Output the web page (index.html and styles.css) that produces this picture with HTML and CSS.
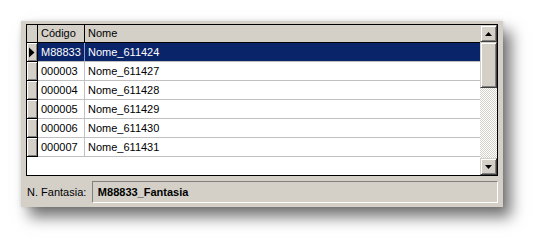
FILE: index.html
```html
<!DOCTYPE html>
<html>
<head>
<meta charset="utf-8">
<link rel="stylesheet" href="styles.css">
</head>
<body>
<div class="panel">
  <div class="grid">
    <div class="data">
      <div class="row head">
        <div class="ind"></div>
        <div class="c1">Código</div>
        <div class="c2">Nome</div>
      </div>
      <div class="row sel">
        <div class="ind"><svg width="6" height="11" viewBox="0 0 6 11"><path d="M0 0.5 L5.5 5.5 L0 10.5 Z" fill="#000"/></svg></div>
        <div class="c1">M88833</div>
        <div class="c2">Nome_611424</div>
      </div>
      <div class="row"><div class="ind"></div><div class="c1">000003</div><div class="c2">Nome_611427</div></div>
      <div class="row"><div class="ind"></div><div class="c1">000004</div><div class="c2">Nome_611428</div></div>
      <div class="row"><div class="ind"></div><div class="c1">000005</div><div class="c2">Nome_611429</div></div>
      <div class="row"><div class="ind"></div><div class="c1">000006</div><div class="c2">Nome_611430</div></div>
      <div class="row"><div class="ind"></div><div class="c1">000007</div><div class="c2">Nome_611431</div></div>
    </div>
    <div class="sbar">
      <div class="btn"><svg width="7" height="4" viewBox="0 0 7 4"><path d="M3.5 0 L7 4 L0 4 Z" fill="#000"/></svg></div>
      <div class="thumb"></div>
      <div class="track"></div>
      <div class="btn"><svg width="7" height="4" viewBox="0 0 7 4"><path d="M0 0 L7 0 L3.5 4 Z" fill="#000"/></svg></div>
    </div>
  </div>
  <div class="foot">
    <span class="lbl">N. Fantasia:</span>
    <div class="field">M88833_Fantasia</div>
  </div>
</div>
</body>
</html>
```
FILE: styles.css
```css
html, body {
  margin: 0;
  padding: 0;
  background: #fff;
}
body {
  width: 546px;
  height: 250px;
  overflow: hidden;
  font-family: "Liberation Sans", Arial, sans-serif;
  font-size: 11px;
  color: #000;
}
.panel {
  margin: 21px 0 0 21px;
  width: 482px;
  height: 186px;
  box-sizing: border-box;
  background: #d4d0c8;
  padding: 3px 5px 0 5px;
  box-shadow: 8px 10px 14px rgba(0,0,0,0.55), 0 0 4px rgba(0,0,0,0.12);
  display: flex;
  flex-direction: column;
}
.grid {
  width: 472px;
  height: 152px;
  box-sizing: border-box;
  border: 1px solid #000;
  background: #fff;
  display: flex;
}
.data {
  width: 453px;
  height: 150px;
  display: flex;
  flex-direction: column;
  background: #fff;
}
.row {
  display: flex;
  height: 19px;
  box-sizing: border-box;
  border-bottom: 1px solid #c0c0c0;
}
.row > div {
  box-sizing: border-box;
  height: 18px;
  line-height: 18px;
  padding-left: 3px;
  white-space: nowrap;
}
.ind {
  width: 11px;
  flex: none;
  background: #d4d0c8;
  border-right: 1px solid #000;
  box-shadow: inset 1px 1px 0 #fff, inset -1px -1px 0 #808080;
  display: flex;
  align-items: center;
  padding-left: 0 !important;
}
.ind svg { margin-left: 2px; }
.row:not(.head) .ind { height: 19px; margin-bottom: -1px; border-bottom: 1px solid #000; }
.c1 {
  width: 47px;
  flex: none;
  border-right: 1px solid #c0c0c0;
}
.c2 { flex: 1; }
.head {
  height: 18px;
  background: #d4d0c8;
  border-bottom: 1px solid #000;
}
.head > div { height: 17px; line-height: 17px; }
.head .ind { box-shadow: none; }
.head .c1 { border-right: 1px solid #000; }
.sel .c1, .sel .c2 {
  background: #0a246a;
  color: #fff;
}
.sel .c1 { border-right: 1px solid #8a9cc8; }
.sbar {
  width: 17px;
  height: 150px;
  display: flex;
  flex-direction: column;
  background-color: #fff;
  background-image: repeating-conic-gradient(#d4d0c8 0 25%, #fff 0 50%);
  background-size: 2px 2px;
}
.btn, .thumb {
  background: #d4d0c8;
  box-sizing: border-box;
  border-top: 1px solid #d4d0c8;
  border-left: 1px solid #d4d0c8;
  border-right: 1px solid #404040;
  border-bottom: 1px solid #404040;
  box-shadow: inset 1px 1px 0 #fff, inset -1px -1px 0 #808080;
}
.btn {
  height: 17px;
  display: flex;
  align-items: center;
  justify-content: center;
}
.thumb { height: 46px; }
.track { flex: 1; }
.foot {
  display: flex;
  align-items: center;
  margin-top: 5px;
  height: 22px;
}
.lbl {
  width: 65px;
  padding-left: 1px;
  color: #000;
}
.field {
  width: 407px;
  height: 22px;
  box-sizing: border-box;
  border-top: 1px solid #808080;
  border-left: 1px solid #808080;
  border-right: 1px solid #fff;
  border-bottom: 1px solid #fff;
  font-weight: bold;
  line-height: 20px;
  padding-left: 5px;
}
```
